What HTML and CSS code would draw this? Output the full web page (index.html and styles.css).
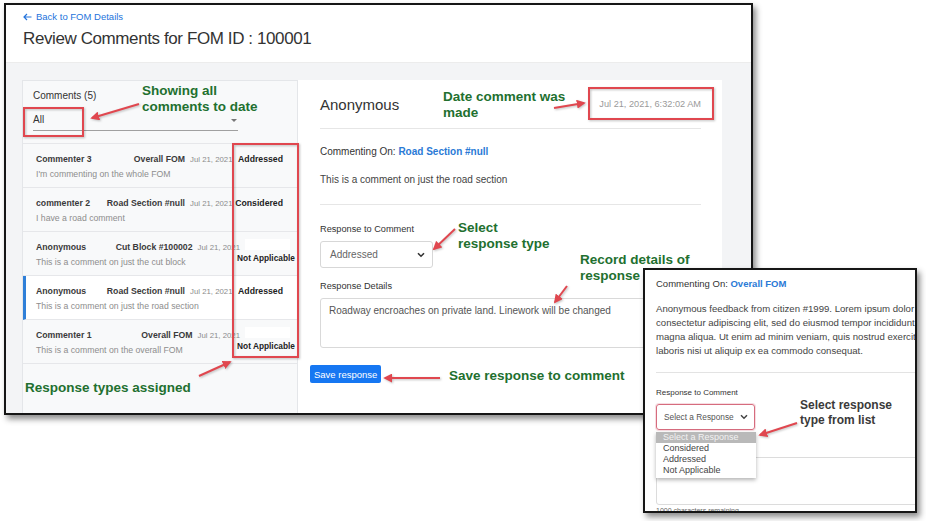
FILE: index.html
```html
<!DOCTYPE html>
<html lang="en">
<head>
<meta charset="utf-8">
<title>Review Comments</title>
<link rel="stylesheet" href="styles.css">
</head>
<body>
<div class="desk">
  <div class="win win-main">
    <header class="hdr">
      <a class="back"><svg width="9" height="8" viewBox="0 0 9 8"><path d="M8.5 4H1M4 1L1 4L4 7" fill="none" stroke="#2474dc" stroke-width="1.2"/></svg>Back to FOM Details</a>
      <h1 class="title">Review Comments for FOM ID : 100001</h1>
    </header>
    <div class="body">
      <aside class="left">
        <div class="lhead">
          <div class="count">Comments (5)</div>
          <div class="filter"><span>All</span><span class="caret"></span></div>
        </div>
        <ul class="list">
          <li class="row"><span class="name">Commenter 3</span><span class="topic">Overall FOM</span><span class="date">Jul 21, 2021</span><span class="status">Addressed</span><span class="text">I'm commenting on the whole FOM</span></li>
          <li class="row"><span class="name">commenter 2</span><span class="topic">Road Section #null</span><span class="date">Jul 21, 2021</span><span class="status">Considered</span><span class="text">I have a road comment</span></li>
          <li class="row na"><span class="name">Anonymous</span><span class="topic">Cut Block #100002</span><span class="date">Jul 21, 2021</span><span class="status">Not Applicable</span><span class="text">This is a comment on just the cut block</span></li>
          <li class="row sel"><span class="name">Anonymous</span><span class="topic">Road Section #null</span><span class="date">Jul 21, 2021</span><span class="status">Addressed</span><span class="text">This is a comment on just the road section</span></li>
          <li class="row na"><span class="name">Commenter 1</span><span class="topic">Overall FOM</span><span class="date">Jul 21, 2021</span><span class="status">Not Applicable</span><span class="text">This is a comment on the overall FOM</span></li>
        </ul>
      </aside>
      <section class="right">
        <div class="rhead">
          <span class="who">Anonymous</span>
          <span class="when">Jul 21, 2021, 6:32:02 AM</span>
        </div>
        <div class="ctx">
          <div class="on">Commenting On: <b>Road Section #null</b></div>
          <p class="msg">This is a comment on just the road section</p>
        </div>
        <div class="lbl first">Response to Comment</div>
        <div class="sel-box"><span>Addressed</span><svg width="8" height="6" viewBox="0 0 8 6"><path d="M1 1.2L4 4.2L7 1.2" fill="none" stroke="#333" stroke-width="1.6"/></svg></div>
        <div class="lbl">Response Details</div>
        <div class="ta">Roadway encroaches on private land. Linework will be changed</div>
        <button class="btn">Save response</button>
      </section>
    </div>
  </div>

  <div class="win win-sub">
    <div class="ctx2">
      <div class="on2">Commenting On: <b>Overall FOM</b></div>
      <p class="para">Anonymous feedback from citizen #1999. Lorem ipsum dolor sit amet,<br>consectetur adipiscing elit, sed do eiusmod tempor incididunt ut labore et dolore<br>magna aliqua. Ut enim ad minim veniam, quis nostrud exercitation ullamco<br>laboris nisi ut aliquip ex ea commodo consequat.</p>
    </div>
    <div class="lbl3">Response to Comment</div>
    <div class="selwrap">
      <span>Select a Response</span><svg width="8" height="6" viewBox="0 0 8 6"><path d="M1 1.2L4 4.2L7 1.2" fill="none" stroke="#444" stroke-width="1.5"/></svg>
      <ul class="drop">
        <li class="hi">Select a Response</li>
        <li>Considered</li>
        <li>Addressed</li>
        <li>Not Applicable</li>
      </ul>
    </div>
    <div class="ta2"></div>
    <div class="chars">1000 characters remaining</div>
  </div>

  <svg class="marks" width="926" height="521" viewBox="0 0 926 521">
    <defs>
      <marker id="ah" viewBox="0 0 10 10" refX="8" refY="5" markerWidth="4.5" markerHeight="4.5" orient="auto"><path d="M0 0L10 5L0 10z" fill="#e0474f"/></marker>
    </defs>
    <g fill="none" stroke="#e0474f" stroke-width="2">
      <rect x="24" y="108" width="59" height="28"/>
      <rect x="233" y="144" width="65" height="213"/>
      <rect x="589" y="88" width="124" height="31"/>
      <line x1="139" y1="104" x2="92" y2="118" marker-end="url(#ah)"/>
      <line x1="554" y1="108" x2="584" y2="103" marker-end="url(#ah)"/>
      <line x1="455" y1="229" x2="434" y2="249" marker-end="url(#ah)"/>
      <line x1="567" y1="286" x2="555" y2="302" marker-end="url(#ah)"/>
      <line x1="440" y1="378" x2="385" y2="378" marker-end="url(#ah)"/>
      <line x1="199" y1="376" x2="230" y2="362" marker-end="url(#ah)"/>
      <line x1="797" y1="423" x2="760" y2="435" marker-end="url(#ah)"/>
    </g>
  </svg>

  <div class="note n1">Showing all<br>comments to date</div>
  <div class="note n2">Date comment was<br>made</div>
  <div class="note n3">Select<br>response type</div>
  <div class="note n4">Record details of<br>response</div>
  <div class="note n5">Save response to comment</div>
  <div class="note n6">Response types assigned</div>
  <div class="note n7">Select response<br>type from list</div>
</div>
</body>
</html>
```

FILE: styles.css
```css
* { box-sizing: border-box; }
html, body { margin: 0; padding: 0; background: #fff; }
body { font-family: "Liberation Sans", Arial, sans-serif; color: #333; }

.desk { position: relative; width: 926px; height: 521px; overflow: hidden; background: #fff; }

.win {
  position: absolute;
  border: 2px solid #161616;
  background: #fff;
  overflow: hidden;
  box-shadow: 3px 4px 6px rgba(0, 0, 0, 0.45);
}

/* ---------- main window ---------- */
.win-main { left: 4px; top: 3px; width: 749px; height: 412px; display: flex; flex-direction: column; }

.hdr { height: 58px; padding: 6px 17px 0; border-bottom: 1px solid #ececec; flex: none; }
.back { display: flex; align-items: center; gap: 4px; font-size: 9.5px; line-height: 12px; color: #2474dc; }
.title { margin: 5px 0 0; font-weight: 400; font-size: 17px; letter-spacing: -0.4px; line-height: 22px; color: #333; }

.body { flex: 1; display: flex; background: #f3f4f6; padding: 17px 29px 0 16px; min-height: 0; }

.left { width: 276px; flex: none; background: #f8f9fa; border: 1px solid #e4e6e9; border-bottom: 0; }
.lhead { padding: 9px 0 0 10px; }
.count { font-size: 10px; line-height: 12px; color: #333; }
.filter {
  margin-top: 6px; width: 205px; display: flex; justify-content: space-between; align-items: center;
  padding: 6px 0 4px; border-bottom: 1px solid #a0a0a0; font-size: 10px; line-height: 12px; color: #333;
}
.caret { width: 0; height: 0; border-left: 3px solid transparent; border-right: 3px solid transparent; border-top: 3px solid #777; margin-right: 1px; }

.list { list-style: none; margin: 12px 0 0; padding: 0; border-top: 1px solid #e6e7ea; }
.row {
  display: grid; grid-template-columns: 1fr auto 43px 50px;
  padding: 10px 14px 7px 13px; border-bottom: 1px solid #e6e7ea;
  font-size: 8.7px; line-height: 11px; white-space: nowrap;
}
.name, .topic { font-weight: 700; color: #3a3a3a; }
.topic { margin-right: 5px; }
.date { color: #8c8c8c; font-size: 7.8px; }
.status { font-weight: 700; color: #222; text-align: right; }
.text { grid-column: 1 / 4; margin-top: 4px; color: #8d8d8d; }

.row.na { grid-template-columns: 1fr auto auto 56px; padding-right: 1px; }
.row.na .status {
  position: relative; grid-column: 4; grid-row: 1 / span 2; align-self: start;
  margin-left: -4px; margin-top: -3px; height: 27px;
  display: flex; align-items: flex-end; justify-content: center; padding-bottom: 2px; font-size: 8.3px;
}
.row.na .status::before {
  content: ""; position: absolute; left: 9px; top: 0; width: 45px; height: 11px; background: #fff;
}
.row.sel { background: #fff; border-left: 3px solid #2f7fd8; padding-left: 10px; }

.right { flex: 1; background: #fff; padding: 0 21px 0 22px; }
.rhead { height: 49px; display: flex; align-items: center; justify-content: space-between; border-bottom: 1px solid #e6e6e6; }
.who { font-size: 15px; color: #333; }
.when { font-size: 9.2px; color: #9a9a9a; }
.ctx { padding: 17px 0 18px; border-bottom: 1px solid #e6e6e6; }
.on { font-size: 10px; line-height: 12px; color: #333; }
.on b { color: #2a7ad6; }
.msg { margin: 16px 0 0; font-size: 10px; line-height: 12px; color: #444; }
.lbl { margin-top: 13px; font-size: 9.2px; line-height: 11px; color: #333; }
.lbl.first { margin-top: 19px; }
.sel-box {
  margin-top: 6px; width: 113px; height: 27px; border: 1px solid #d7d7d7; border-radius: 3px;
  padding: 0 7px 0 9px; display: flex; align-items: center; justify-content: space-between;
  font-size: 10px; color: #666;
}
.ta {
  margin-top: 6px; height: 50px; border: 1px solid #d9d9d9; border-radius: 3px;
  padding: 6px 8px; font-size: 10px; line-height: 12px; color: #555;
}
.btn {
  display: block; margin: 17px 0 0 -10px; height: 18px; padding: 0 4px; border: 0; border-radius: 2px;
  background: #1677f2; color: #fff; font-family: "Liberation Sans", Arial, sans-serif; font-size: 9.5px;
}

/* ---------- second window ---------- */
.win-sub { left: 643px; top: 268px; width: 274px; height: 245px; padding-left: 11px; }
.ctx2 { width: 420px; padding: 8px 0 14px; border-bottom: 1px solid #e3e3e3; }
.on2 { font-size: 9.5px; line-height: 11px; color: #333; }
.on2 b { color: #2a7ad6; }
.para { margin: 13px 0 0; font-size: 9.6px; line-height: 14px; color: #444; white-space: nowrap; }
.lbl3 { margin-top: 15px; font-size: 8px; line-height: 10px; color: #333; }
.selwrap {
  position: relative; margin-top: 6px; width: 99px; height: 26px;
  border: 1px solid #d66c7e; border-radius: 3px; box-shadow: 0 0 0 1px rgba(225, 120, 140, 0.25);
  display: flex; align-items: center; justify-content: space-between; padding: 0 6px 0 7px;
  font-size: 8.3px; color: #555; white-space: nowrap;
}
.drop {
  position: absolute; left: -1px; top: 27px; width: 100px; margin: 0; padding: 0 0 2px; list-style: none;
  background: #fff; box-shadow: 0 2px 4px rgba(0, 0, 0, 0.3); font-size: 9px; line-height: 11px; color: #444;
}
.drop li { padding-left: 7px; }
.drop li.hi { background: #b9b9b9; color: #f2f2f2; }
.ta2 { margin-top: 27px; width: 400px; height: 48px; border: 1px solid #dcdcdc; border-radius: 3px; }
.chars { margin-top: 2px; font-size: 7px; line-height: 8px; color: #666; }

/* ---------- annotations ---------- */
.marks { position: absolute; left: 0; top: 0; pointer-events: none; filter: drop-shadow(1px 1px 1px rgba(0,0,0,0.25)); }
.note {
  position: absolute; font-weight: 700; font-size: 13.5px; line-height: 16px; color: #22702f; white-space: nowrap;
}
.n1 { left: 142px; top: 83px; }
.n2 { left: 443px; top: 89px; }
.n3 { left: 458px; top: 220px; }
.n4 { left: 580px; top: 252px; }
.n5 { left: 449px; top: 368px; }
.n6 { left: 25px; top: 380px; }
.n7 { left: 800px; top: 398px; font-size: 12px; line-height: 15px; color: #3a3a3a; }
```
